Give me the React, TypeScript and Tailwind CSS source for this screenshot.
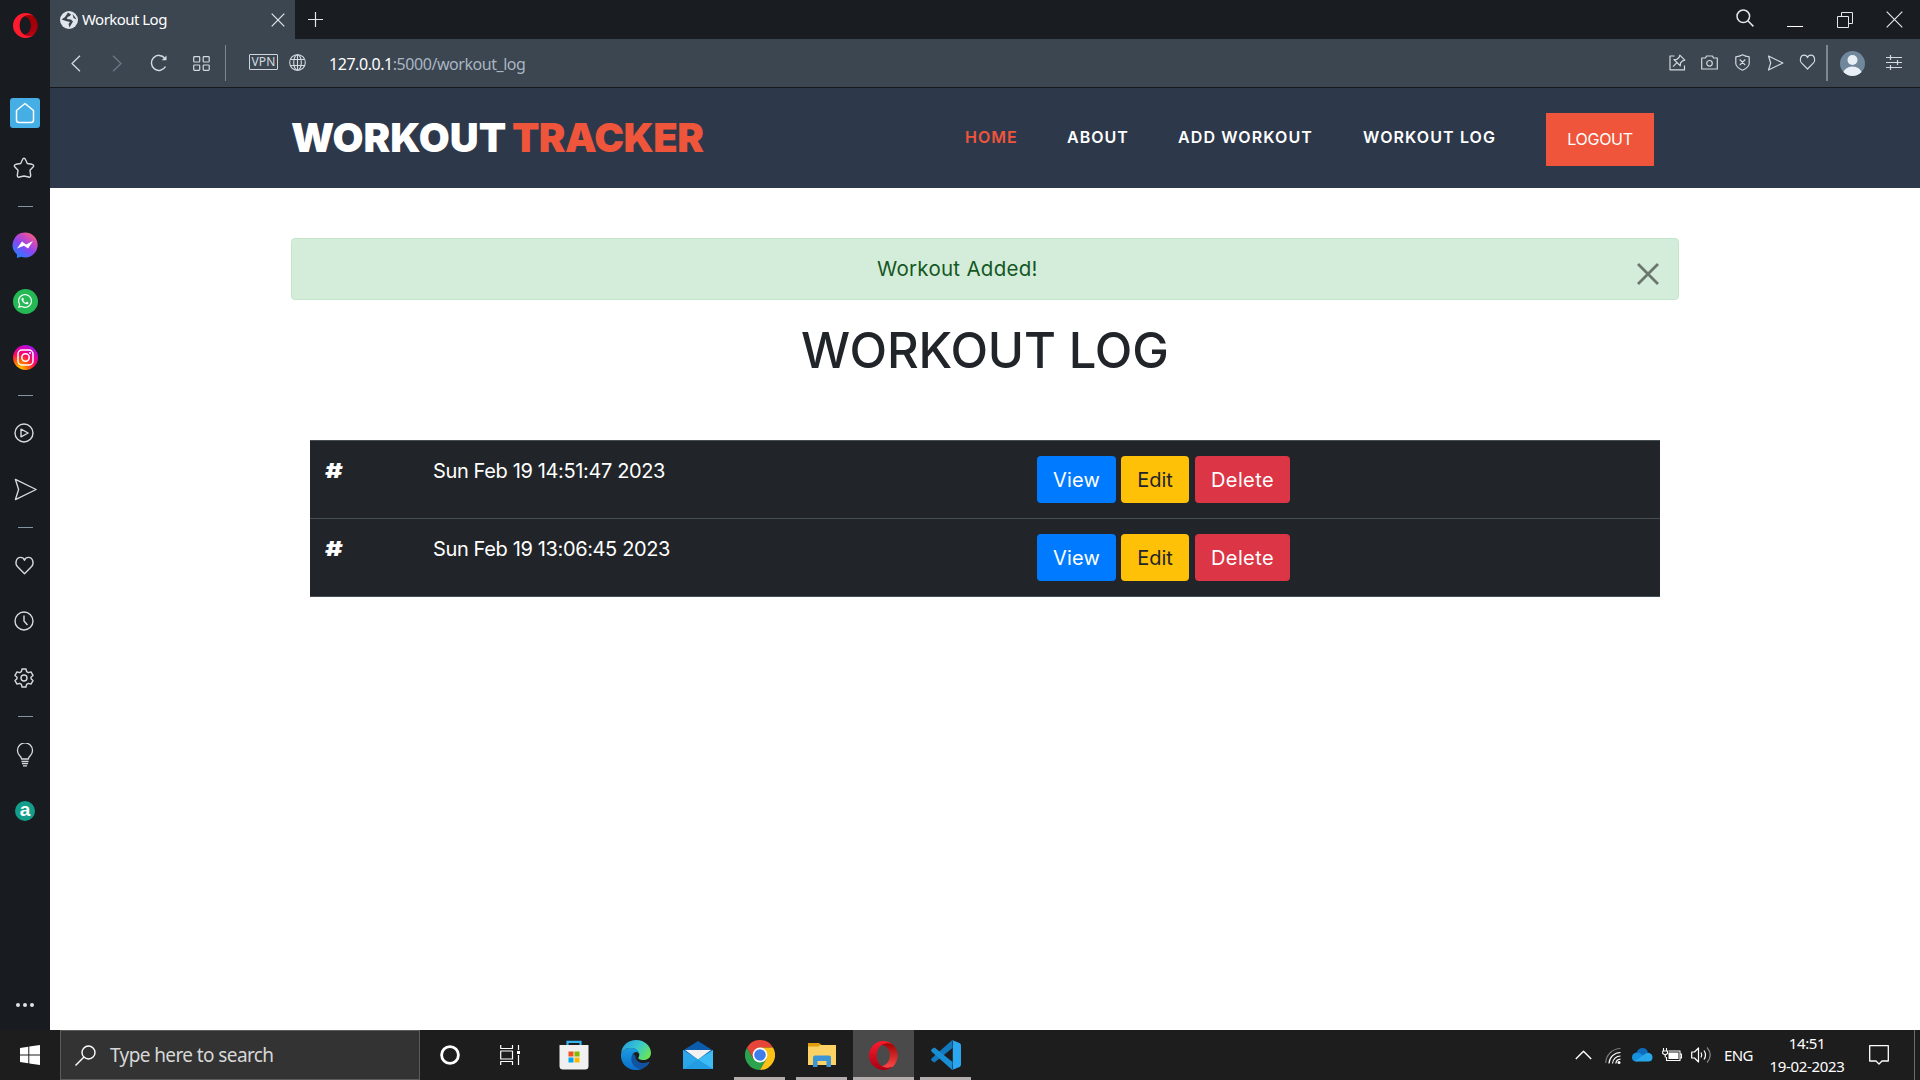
import type { ReactNode } from "react";
import { FaWhatsapp } from "react-icons/fa";

type IconProps = { w?: number; h?: number; box?: string; className?: string; sw?: number; children: ReactNode };

function Line({ w = 16, h = 16, box, className = "", sw = 1.2, children }: IconProps) {
  return (
    <svg width={w} height={h} viewBox={box ?? `0 0 ${w} ${h}`} fill="none" stroke="currentColor" strokeWidth={sw} strokeLinejoin="round" className={`block shrink-0 ${className}`}>
      {children}
    </svg>
  );
}

const Heart = () => <path d="M8 15 L2 8.800 C-.2 6.400 .8 1.200 4.600 1.200 C6.400 1.200 7.600 2.400 8 3.600 C8.400 2.400 9.600 1.200 11.400 1.200 C15.200 1.200 16.200 6.400 14 8.800 Z" />;

const Plane = () => <path d="M1 1 L15.400 8 L1 15 L3.200 8 Z" />;

function OperaLogo({ size, id, className = "" }: { size: number; id: string; className?: string }) {
  return (
    <svg width={size} height={size} viewBox="0 0 30 30" className={`block shrink-0 ${className}`}>
      <defs>
        <linearGradient id={`${id}a`} x1="0" y1="0" x2="0" y2="1">
          <stop offset="0" stopColor="#ff1b2d" />
          <stop offset="1" stopColor={id === "side" ? "#ff1b2d" : "#a70014"} />
        </linearGradient>
        <linearGradient id={`${id}b`} x1="0" y1="0" x2="0" y2="1">
          <stop offset="0" stopColor="#9c0000" />
          <stop offset="1" stopColor={id === "side" ? "#b00015" : "#ff4b4b"} />
        </linearGradient>
      </defs>
      <path fill={`url(#${id}b)`} d="M10.500 4C14 .5 20 .5 24.500 3.500C31 9 31.500 20 25 26.300C20 29.500 14 29.500 10.500 26C16 27 21.500 22.500 21.500 15S16 3 10.500 4z" />
      <path fillRule="evenodd" fill={`url(#${id}a)`} d="M15 0a15 15 0 1 0 0 30c3.500 0 7-1.300 9.500-3.500c-7 3-16.500 0-16.500-11.500s9.500-14.500 16.500-11.500c-2.500-2.200-6-3.500-9.500-3.500z" />
    </svg>
  );
}

function Slot({ children }: { children: ReactNode }) {
  return <div className="flex h-14 w-full shrink-0 items-center justify-center">{children}</div>;
}

function Divider() {
  return (
    <div className="flex h-[20.600px] w-full shrink-0 items-center justify-center pl-px">
      <div className="h-px w-[15px] bg-[#8294a3]" />
    </div>
  );
}

function Sidebar() {
  return (
    <aside className="flex h-[1030px] w-[50px] shrink-0 flex-col items-center bg-[#181b20] text-[#d5dbe0]">
      <div className="flex h-[84.500px] shrink-0 items-start pt-[13px]">
        <OperaLogo size={25} id="side" />
      </div>
      <Slot>
        <div className="flex h-[30px] w-[30px] items-center justify-center rounded-[3px] bg-[#45aee4] text-white">
          <Line w={20} h={22} sw={1.5}>
            <path d="M10 1.500 L18.500 8.500 V18 Q18.500 20.500 16 20.500 H4 Q1.500 20.500 1.500 18 V8.500 Z" />
          </Line>
        </div>
      </Slot>
      <Slot>
        <Line w={22} h={22} sw={1.4} className="mr-[2px] mb-px">
          <path d="M11 1.300 Q12 1.300 12.600 2.800 L14.300 6.500 L19 7.300 Q21.500 8 20.300 9.800 L17 13.300 L17.700 18.300 Q17.700 20.800 15.500 20 L11 19 L6.500 20 Q4.300 20.800 4.300 18.300 L5 13.300 L1.700 9.800 Q.5 8 3 7.300 L7.700 6.500 L9.400 2.800 Q10 1.300 11 1.300Z" />
        </Line>
      </Slot>
      <Divider />
      <Slot>
        <svg width="26" height="26" viewBox="0 0 26 26" className="mb-px block">
          <defs>
            <linearGradient id="msg" x1=".15" y1="1" x2=".85" y2="0">
              <stop offset="0" stopColor="#1688ff" />
              <stop offset=".45" stopColor="#8b45f2" />
              <stop offset=".75" stopColor="#d24ab8" />
              <stop offset="1" stopColor="#ff6968" />
            </linearGradient>
          </defs>
          <path fill="url(#msg)" d="M13 .5a12.500 12.500 0 1 1-4 24.300L5 26V22.500A12.500 12.500 0 0 1 13 .5z" />
          <path fill="#fff" d="M5 16.500 L10 9.500 L14 12.500 L21 9 L16 16.500 L12 13.800 Z" />
        </svg>
      </Slot>
      <Slot>
        <div className="flex h-[25px] w-[25px] items-center justify-center rounded-full bg-[#24b955] text-white">
          <FaWhatsapp size={16} />
        </div>
      </Slot>
      <Slot>
        <svg width="25" height="25" viewBox="0 0 25 25" className="block" fill="none">
          <defs>
            <radialGradient id="ig" cx=".25" cy="1" r="1.150">
              <stop offset="0" stopColor="#ffd600" />
              <stop offset=".3" stopColor="#ff6a00" />
              <stop offset=".55" stopColor="#ff0a5c" />
              <stop offset=".8" stopColor="#d300c5" />
              <stop offset="1" stopColor="#7638fa" />
            </radialGradient>
          </defs>
          <circle cx="12.500" cy="12.500" r="12.500" fill="url(#ig)" />
          <rect x="5" y="5" width="15" height="15" rx="4" stroke="#fff" strokeWidth="1.500" />
          <circle cx="12.500" cy="12.500" r="3.700" stroke="#fff" strokeWidth="1.600" />
          <circle cx="17" cy="8" r="1" fill="#fff" />
        </svg>
      </Slot>
      <Divider />
      <Slot>
        <Line w={20} h={20} sw={1.4} className="mr-[2px] mb-px">
          <circle cx="10" cy="10" r="9" />
          <path d="M7 6.200 L14.200 10 L7 13.800 Z" />
        </Line>
      </Slot>
      <Slot>
        <Line w={23} h={23} box="0 0 16 16" sw={0.95} className="mb-px">
          <Plane />
        </Line>
      </Slot>
      <Divider />
      <Slot>
        <Line w={21} h={19} box="0 0 16 16" sw={1.15} className="mr-px mb-px">
          <Heart />
        </Line>
      </Slot>
      <Slot>
        <Line w={20} h={20} sw={1.4} className="mr-[2px] mb-[2px]">
          <circle cx="10" cy="10" r="9" />
          <path d="M10 4.500 V10 L13.500 14" />
        </Line>
      </Slot>
      <Slot>
        <Line w={20} h={20} sw={1.4} className="mr-[2px] mb-px">
          <path d="M8 1 H12 L12.600 3.700 L14.400 4.700 L17 3.900 L19 7.400 L17 9.200 V10.800 L19 12.600 L17 16.100 L14.400 15.300 L12.600 16.300 L12 19 H8 L7.400 16.300 L5.600 15.300 L3 16.100 L1 12.600 L3 10.800 V9.200 L1 7.400 L3 3.900 L5.600 4.700 L7.400 3.700 Z" />
          <circle cx="10" cy="10" r="3" />
        </Line>
      </Slot>
      <Divider />
      <Slot>
        <Line w={18} h={24} sw={1.3}>
          <path d="M5.500 16 Q5.500 14 3.500 12.500 A7.500 7.500 0 1 1 14.500 12.500 Q12.500 14 12.500 16 Z" />
          <path d="M5.500 18.500 H12.500 M6 20.700 H12 M7 22.900 H11" />
        </Line>
      </Slot>
      <Slot>
        <div className="flex h-5 w-5 items-center justify-center rounded-full bg-[#129e8a] pb-[3px] font-['Liberation_Sans',sans-serif] text-[19px] leading-none font-bold text-white">a</div>
      </Slot>
      <div className="mt-auto mb-[23px] flex gap-[3px]">
        <i className="h-1 w-1 rounded-full bg-[#dde3e8]" />
        <i className="h-1 w-1 rounded-full bg-[#dde3e8]" />
        <i className="h-1 w-1 rounded-full bg-[#dde3e8]" />
      </div>
    </aside>
  );
}

function TabBar() {
  return (
    <div className="flex h-[39px] items-center bg-[#191c20] text-[#e3e7ea]">
      <div className="flex h-full w-[245px] items-center bg-[#3b4651] pl-[10px]">
        <svg width="18" height="18" viewBox="0 0 18 18" className="block">
          <circle cx="9" cy="9" r="9" fill="#e2e6ea" />
          <path d="M8 1.500 L11 3.500 L10 5 L7.500 6 L7 8 L11 8.500 L13 10.500 L11.500 13 L9.500 16.500 L8.500 13 L10 11 L6 10 L1.500 8.500 L5 6 Z M12.500 3 L15 6 L16.500 8.500 L13.500 7 Z" fill="#3b4651" />
        </svg>
        <span className="ml-[4px] w-[189px] text-[15px] tracking-[-0.54px] whitespace-nowrap text-white">Workout Log</span>
        <Line w={14} h={14} sw={1.2}>
          <path d="M.7 .7 L13.300 13.300 M13.300 .7 L.7 13.300" />
        </Line>
      </div>
      <Line w={15} h={15} sw={1.2} className="mb-px ml-[13px]">
        <path d="M7.500 0 V15 M0 7.500 H15" />
      </Line>
      <div className="ml-auto flex items-center pr-[17px]">
        <Line w={18} h={18} sw={1.5} className="mb-[3px]">
          <circle cx="7.300" cy="7.300" r="6.300" />
          <path d="M11.800 11.800 L17.400 17.400" />
        </Line>
        <div className="mt-[13px] ml-[33px] h-px w-4 bg-white" />
        <Line w={16} h={16} sw={1} className="ml-[34px]">
          <path d="M.5 4.500 H11.500 V15.500 H.5 Z M4.500 4.500 V.5 H15.500 V11.500 H11.500" />
        </Line>
        <Line w={17} h={17} sw={1.2} className="ml-[33px]">
          <path d="M.7 .7 L16.300 16.300 M16.300 .7 L.7 16.300" />
        </Line>
      </div>
    </div>
  );
}

function AddressBar() {
  return (
    <div className="flex h-[49px] items-center border-b border-[#15181c] bg-[#3b4651] text-[#d3d9de]">
      <Line w={10} h={17} sw={1.3} className="ml-[21px]">
        <path d="M9 .8 L1 8.500 L9 16.200" />
      </Line>
      <Line w={10} h={17} sw={1.3} className="ml-[31px] text-[#6c7883]">
        <path d="M1 .8 L9 8.500 L1 16.200" />
      </Line>
      <Line w={18} h={18} sw={1.5} className="ml-[28px]">
        <path d="M15.500 12.500 A7.500 7.500 0 1 1 14.800 4.200" />
        <path d="M16.500 1.500 V6.300 H11.700 Z" fill="currentColor" stroke="none" />
      </Line>
      <Line w={17} h={15} sw={1.2} className="ml-[25px]">
        <rect x=".7" y=".7" width="6" height="5.300" rx=".8" />
        <rect x="10.200" y=".7" width="6" height="5.300" rx=".8" />
        <rect x=".7" y="9" width="6" height="5.300" rx=".8" />
        <rect x="10.200" y="9" width="6" height="5.300" rx=".8" />
      </Line>
      <div className="ml-[15px] h-9 w-px bg-[#7b8791]" />
      <div className="mb-[2px] ml-[23px] flex h-4 w-[29px] items-center justify-center rounded-[1px] border border-[#cfd5da] text-[12px] leading-none tracking-[0.2px]">VPN</div>
      <Line w={17} h={17} sw={1.1} className="mb-[2px] ml-[11px]">
        <circle cx="8.500" cy="8.500" r="7.800" />
        <ellipse cx="8.500" cy="8.500" rx="3.800" ry="7.800" />
        <path d="M8.500 .7 V16.300 M1.500 5.500 H15.500 M1.500 11.500 H15.500" />
      </Line>
      <span className="ml-[23px] pt-px text-[16px] tracking-[-0.45px] whitespace-nowrap text-[#a9b5c1]">
        <span className="text-white">127.0.0.1</span>:5000/workout_log
      </span>
      <div className="ml-auto flex items-center pr-[18px]">
        <Line w={17} h={17} sw={1.2} className="mb-px">
          <path d="M5.500 2 H1 V15.800 H15.500 V11.500 M10.800 1.200 L15.800 6.200 L13.500 6.800 L11.500 9 L11.300 11.800 L5 5.500 L8 5.300 L10.200 3.200 Z M8 8.700 L4 12.700" />
        </Line>
        <Line w={17} h={15} sw={1.2} className="mb-px ml-[15px]">
          <path d="M.7 3 H4.500 L5.500 1 H11.500 L12.500 3 H16.300 V14 H.7 Z" />
          <circle cx="8.500" cy="8.300" r="2.800" />
        </Line>
        <Line w={15} h={17} sw={1.2} className="mb-px ml-[17px]">
          <path d="M7.500 .8 Q10.500 2.500 14.200 2.800 V10 Q13.500 13.500 7.500 16.200 Q1.500 13.500 .8 10 V2.800 Q4.500 2.500 7.500 .8Z M4.700 5.500 L10.300 11.100 M10.300 5.500 L4.700 11.100" />
        </Line>
        <Line w={17} h={16} box="0 0 16 16" className="ml-[17px]">
          <Plane />
        </Line>
        <Line w={17} h={16} box="0 0 16 16" className="mb-[2px] ml-[15px]">
          <Heart />
        </Line>
        <div className="ml-[10px] h-9 w-[2px] bg-[#7b8791]" />
        <svg width="25" height="25" viewBox="0 0 25 25" className="ml-[12px] block">
          <defs>
            <clipPath id="avatar">
              <circle cx="12.500" cy="12.500" r="12.500" />
            </clipPath>
          </defs>
          <g clipPath="url(#avatar)">
            <rect width="25" height="25" fill="#71879b" />
            <circle cx="12.500" cy="9" r="5" fill="#e9eff6" />
            <ellipse cx="12.500" cy="22" rx="9" ry="6.500" fill="#e9eff6" />
          </g>
        </svg>
        <Line w={16} h={16} sw={1.2} className="ml-[21px]">
          <path d="M0 2.500 H16 M0 7.500 H16 M0 12.500 H16 M4.500 0 V5 M11.500 5 V10 M4.500 10 V15" />
        </Line>
      </div>
    </div>
  );
}

function Navbar() {
  return (
    <nav className="flex h-[100px] items-start bg-[#2d394b] font-[Inter,sans-serif] text-[16px] leading-6 font-semibold tracking-[1px] whitespace-nowrap text-white">
      <div className="mt-[26px] ml-[241px] flex w-[674px] text-[40px] leading-[48px] font-black">
        <span className="w-[221px] tracking-[0px]">WORKOUT</span>
        <span className="tracking-[-0.6px] text-[#ef553b]">TRACKER</span>
      </div>
      <a className="mt-[37px] w-[102px] text-[#ef553b]">HOME</a>
      <a className="mt-[37px] w-[111px]">ABOUT</a>
      <a className="mt-[37px] w-[185px] tracking-[1.1px]">ADD WORKOUT</a>
      <a className="mt-[37px] w-[183px] tracking-[1.1px]">WORKOUT LOG</a>
      <a className="mt-[25px] flex h-[53px] w-[108px] items-center justify-center bg-[#ef553b] pb-px font-normal tracking-[-0.3px]">LOGOUT</a>
    </nav>
  );
}

function LogRow({ date }: { date: string }) {
  return (
    <div className="flex h-[78px] border-t border-[#454d55] text-[20px] leading-[30px] whitespace-nowrap text-white">
      <div className="w-[108px] pt-[15px] pl-[15px]">
        <span className="inline-block origin-left scale-x-[1.350] font-black">#</span>
      </div>
      <div className="w-[604px] pt-[15px] pl-[15px] tracking-[-0.37px]">{date}</div>
      <div className="flex gap-[5px] pt-[15px] pl-[15px]">
        <button className="h-[47px] w-[79px] rounded bg-[#007bff] tracking-[0.2px]">View</button>
        <button className="h-[47px] w-[68px] rounded bg-[#ffc107] text-[#212529]">Edit</button>
        <button className="ml-px h-[47px] w-[95px] rounded bg-[#dc3545] tracking-[0.4px]">Delete</button>
      </div>
    </div>
  );
}

function Content() {
  return (
    <main className="flex grow flex-col bg-white font-[Inter,sans-serif]">
      <div className="mt-[50px] ml-[241px] flex h-[62px] w-[1388px] items-center rounded border border-[#c3e6cb] bg-[#d4edda] pr-[19px] text-[20.500px] text-[#155724]">
        <span className="ml-[585px] tracking-[0.28px] whitespace-nowrap">Workout Added!</span>
        <Line w={22} h={22} sw={2.8} className="mt-[10px] ml-auto text-[#6a776d]">
          <path d="M1 1 L21 21 M21 1 L1 21" />
        </Line>
      </div>
      <h1 className="mt-[21px] w-full pl-[751px] text-[49px] leading-[60px] font-medium tracking-[-0.15px] whitespace-nowrap text-[#212529]">WORKOUT LOG</h1>
      <div className="mt-[59px] ml-[260px] w-[1350px] border-b border-[#454d55] bg-[#212529]">
        <LogRow date="Sun Feb 19 14:51:47 2023" />
        <LogRow date="Sun Feb 19 13:06:45 2023" />
      </div>
    </main>
  );
}

function TaskApp({ children, state }: { children: ReactNode; state?: "running" | "active" }) {
  return (
    <div className={`flex h-full w-[61px] shrink-0 flex-col items-center ${state === "active" ? "bg-[#4a4a4b]" : ""}`}>
      <div className="flex h-[47px] items-center pt-[3px]">{children}</div>
      {state && <div className={`h-[3px] bg-[#b3aead] ${state === "active" ? "w-full" : "w-[51px]"}`} />}
    </div>
  );
}

function Taskbar() {
  return (
    <footer className="flex h-[50px] items-center bg-[#1d1d1d] text-white">
      <svg width="20" height="20" viewBox="0 0 20 20" fill="#fff" className="ml-5 block">
        <path d="M0 3 L8.300 1.700 V9.500 H0Z M9.300 1.500 L20 0 V9.500 H9.300Z M0 10.500 H8.300 V18.300 L0 17Z M9.300 10.500 H20 V20 L9.300 18.500Z" />
      </svg>
      <div className="ml-5 flex h-[50px] w-[360px] items-center border border-[#5c5c5c] bg-[#333] pl-[14px]">
        <Line w={21} h={21} sw={1.4}>
          <circle cx="13.500" cy="7.500" r="6.500" />
          <path d="M9 12 L.5 20.500" />
        </Line>
        <span className="ml-[14px] pt-px text-[19px] tracking-[-0.6px] whitespace-nowrap text-[#d7d7d7]">Type here to search</span>
      </div>
      <Line w={20} h={20} sw={2.8} className="ml-5">
        <circle cx="10" cy="10" r="8.400" />
      </Line>
      <Line w={20} h={20} sw={1.2} className="ml-10">
        <path d="M.7 0 V3.500 H12.500 V0 M.7 6 H12.500 V14 H.7 Z M.7 20 V16.500 H12.500 V20 M18.500 0 V5 M18.500 10 V20" />
        <rect x="17" y="6" width="3" height="3" fill="#fff" stroke="none" />
      </Line>
      <div className="ml-[23px] flex h-full gap-px">
        <TaskApp>
          <svg width="30" height="30" viewBox="0 0 30 30">
            <path d="M8.500 6 V1.800 H21.500 V6" fill="none" stroke="#35b4ee" strokeWidth="2.200" />
            <path d="M.5 5 H29.500 V26 Q29.500 29.500 26 29.500 H4 Q.5 29.500 .5 26Z" fill="#f0f0f0" />
            <rect x="9.500" y="11.500" width="5" height="5" fill="#f25022" />
            <rect x="15.500" y="11.500" width="5" height="5" fill="#7fba00" />
            <rect x="9.500" y="17.500" width="5" height="5" fill="#00a4ef" />
            <rect x="15.500" y="17.500" width="5" height="5" fill="#ffb900" />
          </svg>
        </TaskApp>
        <TaskApp>
          <svg width="30" height="30" viewBox="0 0 30 30">
            <defs>
              <linearGradient id="edgeTop" x1="0" y1=".2" x2="1" y2=".7">
                <stop offset="0" stopColor="#259ddf" />
                <stop offset=".5" stopColor="#37c8d0" />
                <stop offset="1" stopColor="#6be553" />
              </linearGradient>
              <linearGradient id="edgeLow" x1="0" y1="0" x2="0" y2="1">
                <stop offset="0" stopColor="#1b9de2" />
                <stop offset="1" stopColor="#0a6ecb" />
              </linearGradient>
            </defs>
            <path fill="url(#edgeLow)" d="M0 14C1 10 6 7.500 11 8C17 8.500 18.500 12 18 14C17.500 11.500 13 11 11.500 15C9.500 21 15 29 22 28.500C13 33-1 28 0 14Z" />
            <path fill="#1153a0" d="M12 13.500C8 19 11 28 20 29.200C24 28 27 25.500 28.500 22.500C28.500 21.500 27.500 21.500 27 22C21 25 14 21.500 14.500 16Z" />
            <path fill="url(#edgeTop)" d="M0 13.500C1 5 7.500 0 15 0C24 0 30 6.500 30 13C30 17.500 26.500 20 22.500 20C19 20 16.500 18.800 17.500 17.500C20 14 17 8 10.500 8C5.500 8 1.500 10 0 13.500Z" />
          </svg>
        </TaskApp>
        <TaskApp>
          <svg width="30" height="28" viewBox="0 0 30 28">
            <path d="M0 9.500 L15 0 L30 9.500 V12 H0Z" fill="#0b5cad" />
            <path d="M0 9 H30 V20 H0Z" fill="#35b5ee" />
            <path d="M0 9 H30 L15 18.500Z" fill="#0b5cad" />
            <path d="M2 9 H28 L15 18.500Z" fill="#f1f1f1" />
            <path d="M0 9.500 L15 18.500 L30 28 H0Z" fill="#2ba6e8" />
            <path d="M30 9.500 L0 28 H30Z" fill="#3cbcf2" />
            <path d="M15 18.500 L30 28 H0Z" fill="#239ce2" />
          </svg>
        </TaskApp>
        <TaskApp state="running">
          <svg width="30" height="30" viewBox="0 0 30 30">
            <path d="M15 15 L2 7.500 A15 15 0 0 1 28 7.500 H15Z" fill="#e8453a" />
            <path d="M15 15 L21.500 18.700 L15 30 A15 15 0 0 1 2 7.500 L8.500 18.700Z" fill="#2ba24c" />
            <path d="M15 7.500 H28 A15 15 0 0 1 15 30 L21.500 18.700Z" fill="#fbc116" />
            <path d="M2 7.500 L8.500 18.700 L15 15 V7.500Z" fill="#e8453a" />
            <circle cx="15" cy="15" r="7.400" fill="#fff" />
            <circle cx="15" cy="15" r="5.800" fill="#3f7cec" />
          </svg>
        </TaskApp>
        <TaskApp state="running">
          <svg width="28" height="24" viewBox="0 0 28 24">
            <path d="M0 0 H11 L13.500 2 V6 H0Z" fill="#e19d0b" />
            <path d="M0 3.500 H10 L12.500 2 H28 V22 H0Z" fill="#fcd264" />
            <path d="M5 24 V14.500 Q5 12.500 7 12.500 H21 Q23 12.500 23 14.500 V24 H18.500 V18 H9.500 V24Z" fill="#3c96d6" />
          </svg>
        </TaskApp>
        <TaskApp state="active">
          <OperaLogo size={29} id="task" />
        </TaskApp>
        <TaskApp state="running">
          <svg width="30" height="30" viewBox="0 0 30 30">
            <path d="M21.500 8 L3.500 22.500 L1.500 21.500 L0 19.800 Q0 19 1 18 L21 .2Z" fill="#1279bd" />
            <path d="M21.500 22 L3.500 7.500 L1 9 L0 10.300 Q0 11 1 12 L21 29.800Z" fill="#188fd4" />
            <path d="M21 0 L28.500 3 Q30 3.800 30 5.500 V24.500 Q30 26.200 28.500 27 L21 30 Q21.800 29 21.800 28 V2 Q21.800 1 21 0Z" fill="#2aa7f0" />
          </svg>
        </TaskApp>
      </div>
      <div className="ml-auto flex h-full items-center">
        <Line w={17} h={10} sw={1.4}>
          <path d="M.8 9 L8.500 1.200 L16.200 9" />
        </Line>
        <Line w={16} h={17} sw={1.2} className="ml-[13px]">
          <path d="M.7 16 A15 15 0 0 1 15.500 1.500" stroke="#777" />
          <path d="M4 16.500 A11.500 11.500 0 0 1 15.500 5.500 M7.500 16.500 A8 8 0 0 1 15.500 9 M10.800 16.500 A5 5 0 0 1 15.500 12.200" />
          <circle cx="14" cy="15.500" r="1.500" fill="#fff" stroke="none" />
        </Line>
        <svg width="21" height="14" viewBox="0 0 21 14" className="ml-[11px] block">
          <path d="M4.500 5 Q6 0 10.500 0 Q14.500 0 16 4 L10 9 L3 8Z" fill="#0f6cbd" />
          <path d="M4.500 13.500 Q0 13.500 0 9.500 Q0 5 5 4.500 Q8 4.500 10 6.500 L16 10Z" fill="#1490df" />
          <path d="M3 13 L13 6 Q15 4 17.500 5 Q21 6.500 20.500 10 Q20 13.500 16.500 13.500 H4Z" fill="#28a8ea" />
        </svg>
        <Line w={20} h={15} sw={1.1} className="ml-[9px]">
          <path d="M6.500 3 H18 V12.500 H4.500 V9 M18 6 H19.500 V10 H18 M1.500 0 V3 M4.500 0 V3 M.7 3 H5.500 V5.500 L3.200 7 L.7 5.500Z M3.200 7 V9.500" />
          <rect x="6.500" y="4.500" width="10" height="6.500" fill="#fff" stroke="none" />
        </Line>
        <Line w={21} h={18} sw={1.2} className="ml-[9px]">
          <path d="M.7 6 H3.500 L7.500 2 V16 L3.500 12 H.7Z M10 6.500 Q11.500 9 10 11.500 M13 4.500 Q16 9 13 13.500" />
          <path d="M16 1.500 Q22.500 9 16 16.500" stroke="#888" />
        </Line>
        <span className="ml-[12px] w-[30px] text-[15px] tracking-[-0.6px]">ENG</span>
        <div className="ml-[14px] flex w-[78px] flex-col items-center text-[15px] leading-[23px] tracking-[-0.35px] whitespace-nowrap">
          <span>14:51</span>
          <span>19-02-2023</span>
        </div>
        <Line w={20} h={20} sw={1.3} className="ml-[23px]">
          <path d="M.7 .7 H19.300 V16 H13 L10 19 L7 16 H.7Z" />
        </Line>
        <div className="mr-[5px] ml-[25px] h-full w-px bg-[#6c6c6c]" />
      </div>
    </footer>
  );
}

export default function App() {
  return (
    <div className="flex h-[1080px] w-[1920px] flex-col overflow-hidden bg-white font-['Noto_Sans',sans-serif]">
      <div className="flex h-[1030px]">
        <Sidebar />
        <div className="flex grow flex-col">
          <TabBar />
          <AddressBar />
          <Navbar />
          <Content />
        </div>
      </div>
      <Taskbar />
    </div>
  );
}
